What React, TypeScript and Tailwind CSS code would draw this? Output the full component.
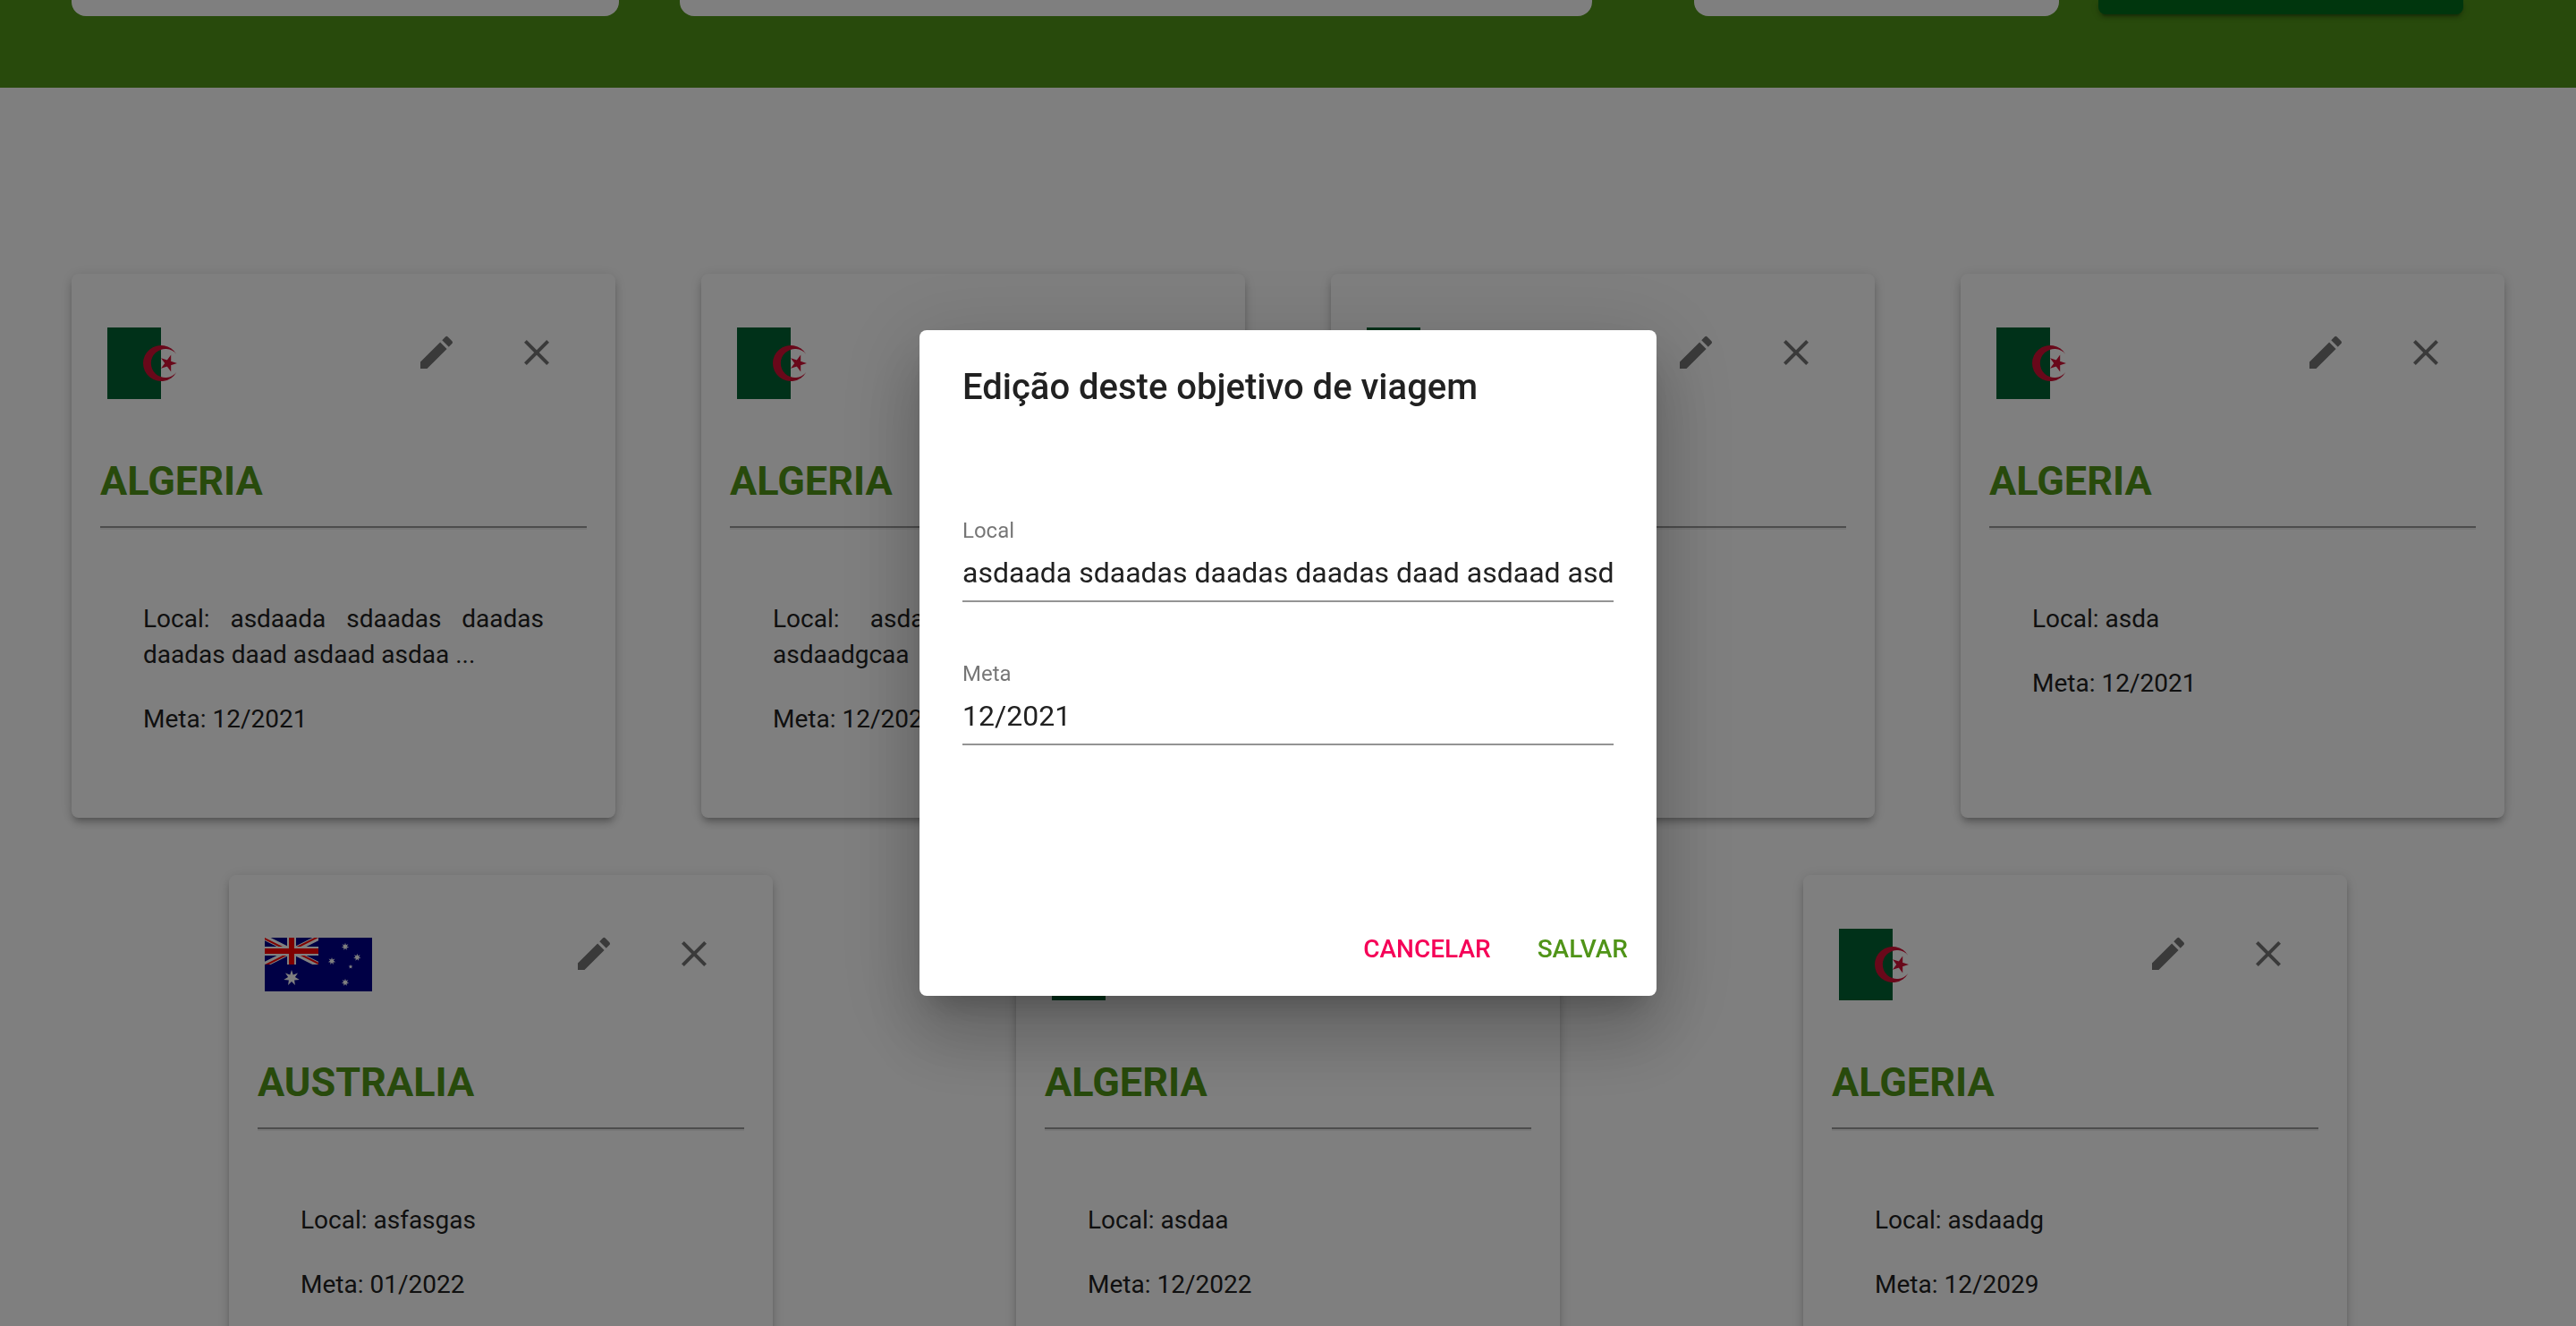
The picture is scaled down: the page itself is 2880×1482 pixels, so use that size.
type Goal = {
  id: number;
  country: string;
  flag: "dz" | "au";
  local: string;
  meta: string;
};

const goals: Goal[] = [
  { id: 1, country: "ALGERIA", flag: "dz", local: "asdaada sdaadas daadas daadas daad asdaad asdaa ...", meta: "12/2021" },
  { id: 2, country: "ALGERIA", flag: "dz", local: "asdaadasda asdaadasda asdaadgcaa", meta: "12/2021" },
  { id: 3, country: "ALGERIA", flag: "dz", local: "asda", meta: "12/2021" },
  { id: 4, country: "ALGERIA", flag: "dz", local: "asda", meta: "12/2021" },
  { id: 5, country: "AUSTRALIA", flag: "au", local: "asfasgas", meta: "01/2022" },
  { id: 6, country: "ALGERIA", flag: "dz", local: "asdaa", meta: "12/2022" },
  { id: 7, country: "ALGERIA", flag: "dz", local: "asdaadg", meta: "12/2029" },
];

function starPoints(cx: number, cy: number, r: number, tips: number) {
  const inner = (r * 4) / 9;
  return Array.from({ length: tips * 2 }, (_, i) => {
    const radius = i % 2 === 0 ? r : inner;
    const angle = (Math.PI * i) / tips - Math.PI / 2;
    return `${(cx + radius * Math.cos(angle)).toFixed(2)},${(cy + radius * Math.sin(angle)).toFixed(2)}`;
  }).join(" ");
}

function AlgeriaFlag() {
  return (
    <svg viewBox="0 0 720 480" className="h-20 w-[120px]" role="img" aria-label="Algeria">
      <path fill="#fff" d="M0 0h720v480H0z" />
      <path fill="#006233" d="M0 0h360v480H0z" />
      <path
        fill="#d21034"
        d="M464 180a120 120 0 1 0 0 120 96 96 0 1 1 0-120m4 60-108-35.2 67.2 92V183.2l-67.2 92z"
      />
    </svg>
  );
}

function AustraliaFlag() {
  return (
    <svg viewBox="0 0 120 60" className="h-[60px] w-[120px]" role="img" aria-label="Australia">
      <defs>
        <clipPath id="canton">
          <path d="M0 0h60v30H0z" />
        </clipPath>
        <clipPath id="saltire">
          <path d="M30 15h30v15zv15H0zH0V0zV0h30z" />
        </clipPath>
      </defs>
      <path fill="#00008b" d="M0 0h120v60H0z" />
      <g clipPath="url(#canton)">
        <path d="M0 0l60 30m0-30L0 30" stroke="#fff" strokeWidth="6" />
        <path d="M0 0l60 30m0-30L0 30" stroke="#f00" strokeWidth="4" clipPath="url(#saltire)" />
        <path d="M30 0v30M0 15h60" stroke="#fff" strokeWidth="10" />
        <path d="M30 0v30M0 15h60" stroke="#f00" strokeWidth="6" />
      </g>
      <g fill="#fff">
        <polygon points={starPoints(30, 45, 9, 7)} />
        <polygon points={starPoints(90, 10, 4.3, 7)} />
        <polygon points={starPoints(103.3, 22, 4.3, 7)} />
        <polygon points={starPoints(75, 26.2, 4.3, 7)} />
        <polygon points={starPoints(90, 50, 4.3, 7)} />
        <polygon points={starPoints(96, 32.5, 2.5, 5)} />
      </g>
    </svg>
  );
}

function IconButton({ label, path }: { label: string; path: string }) {
  return (
    <button type="button" aria-label={label} className="rounded-full p-6 text-black/54">
      <svg viewBox="0 0 24 24" className="size-12" fill="currentColor" aria-hidden="true">
        <path d={path} />
      </svg>
    </button>
  );
}

const EDIT =
  "M3 17.25V21h3.75L17.81 9.94l-3.75-3.75L3 17.25zM20.71 7.04c.39-.39.39-1.02 0-1.41l-2.34-2.34a.9959.9959 0 0 0-1.41 0l-1.83 1.83 3.75 3.75 1.83-1.83z";
const CLOSE =
  "M19 6.41L17.59 5 12 10.59 6.41 5 5 6.41 10.59 12 5 17.59 6.41 19 12 13.41 17.59 19 19 17.59 13.41 12z";

function GoalCard({ goal }: { goal: Goal }) {
  return (
    <article className="mx-4 my-8 h-[608px] w-[608px] rounded-lg bg-white px-8 pt-10 shadow-[0_6px_6px_-4px_rgba(0,0,0,0.2),0_6px_8px_0_rgba(0,0,0,0.14),0_2px_16px_0_rgba(0,0,0,0.12)]">
      <div className="flex items-start justify-between px-2">
        <div className="mt-5 flex h-20 items-center">{goal.flag === "dz" ? <AlgeriaFlag /> : <AustraliaFlag />}</div>
        <div className="flex gap-4">
          <IconButton label="Editar" path={EDIT} />
          <IconButton label="Remover" path={CLOSE} />
        </div>
      </div>
      <h2 className="mt-16 text-[45px] leading-14 font-bold text-[#509418]">{goal.country}</h2>
      <hr className="mt-[22px] border-t-2 border-b-2 border-t-[#9a9a9a] border-b-[#eeeeee]" />
      <div className="mt-20 space-y-8 px-12 text-justify text-[28px] leading-10">
        <p>{`Local: ${goal.local}`}</p>
        <p>{`Meta: ${goal.meta}`}</p>
      </div>
    </article>
  );
}

function Field({ id, label, value }: { id: string; label: string; value: string }) {
  return (
    <div className="flex flex-col">
      <label htmlFor={id} className="text-2xl leading-8 text-black/54">
        {label}
      </label>
      <input
        id={id}
        type="text"
        defaultValue={value}
        className="h-16 w-full border-b-2 border-black/42 bg-transparent pt-3 pb-3 text-[32px] leading-[38px] outline-none"
      />
    </div>
  );
}

export default function App() {
  return (
    <div className="h-screen overflow-hidden bg-white font-[Roboto,sans-serif] text-[#212121]">
      <header className="flex items-start bg-[#509418] px-20 pb-20">
        <input aria-label="País" className="h-[18px] w-[22.5%] rounded-b-2xl bg-white" />
        <input aria-label="Local" className="ml-17 h-[18px] w-[37.5%] rounded-b-2xl bg-white" />
        <input aria-label="Meta" className="ml-[114px] h-[18px] w-[15%] rounded-b-2xl bg-white" />
        <button
          type="button"
          aria-label="Adicionar"
          className="ml-11 h-4 w-[15%] rounded-b-lg bg-[#006d1b] shadow-[0_6px_2px_-4px_rgba(0,0,0,0.2),0_4px_4px_0_rgba(0,0,0,0.14),0_2px_10px_0_rgba(0,0,0,0.12)]"
        />
      </header>
      <main className="flex flex-wrap justify-evenly pt-44">
        {goals.map((goal) => (
          <GoalCard key={goal.id} goal={goal} />
        ))}
      </main>

      <div className="fixed inset-0 flex items-center justify-center bg-black/50">
        <div
          role="dialog"
          aria-modal="true"
          aria-labelledby="dialog-title"
          className="w-[824px] rounded-lg bg-white shadow-[0_22px_30px_-14px_rgba(0,0,0,0.2),0_48px_76px_6px_rgba(0,0,0,0.14),0_18px_92px_16px_rgba(0,0,0,0.12)]"
        >
          <h1 id="dialog-title" className="px-12 py-8 text-[40px] leading-16 font-medium">
            Edição deste objetivo de viagem
          </h1>
          <form className="space-y-16 px-12 pt-20 pb-48">
            <Field id="local" label="Local" value="asdaada sdaadas daadas daadas daad asdaad asdaadaa sdaadas" />
            <Field id="meta" label="Meta" value="12/2021" />
          </form>
          <div className="flex justify-end gap-5 px-4 pb-4 text-[28px] leading-12 font-medium">
            <button type="button" className="rounded-lg px-4 py-3 text-[#f50057]">
              CANCELAR
            </button>
            <button type="button" className="rounded-lg px-4 py-3 text-[#509418]">
              SALVAR
            </button>
          </div>
        </div>
      </div>
    </div>
  );
}
